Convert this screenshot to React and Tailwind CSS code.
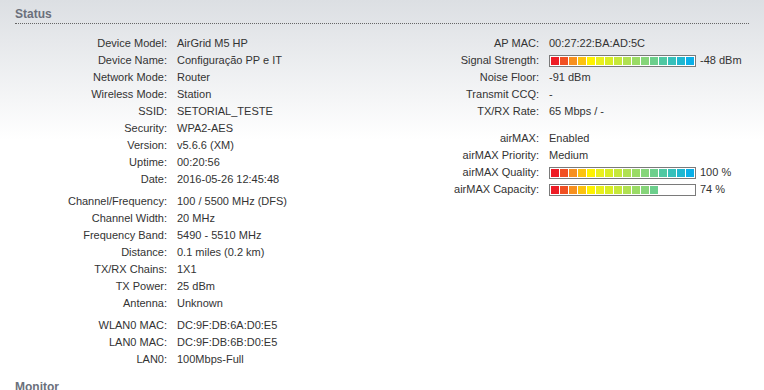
import React from 'react';

const SEGMENT_COLORS = [
  '#ee1c25',
  '#f15022',
  '#f7901e',
  '#fcc20f',
  '#fff200',
  '#eaf01c',
  '#d9ed24',
  '#c6e83a',
  '#b0e152',
  '#9adb66',
  '#86d57a',
  '#6ccf8c',
  '#4fc8a2',
  '#36c0ba',
  '#1fb7d0',
  '#0aafe8',
];

// Segmented level bar (16 blocks)
const LevelBar = ({ filled }) => (
  <span className="inline-flex gap-[1px] p-[1px] border border-[#7a7a7a] bg-white h-[12px] w-[147px] align-middle">
    {SEGMENT_COLORS.map((c, i) => (
      <span
        key={i}
        className="block w-[8px] h-[8px]"
        style={{ backgroundColor: i < filled ? c : 'transparent' }}
      />
    ))}
  </span>
);

const Row = ({ label, labelWidth, children }) => (
  <div className="flex items-center h-[17px]">
    <div className="text-right shrink-0" style={{ width: labelWidth }}>
      {label}
    </div>
    <div className="pl-[10px] flex items-center whitespace-nowrap">{children}</div>
  </div>
);

const left = [
  [
    ['Device Model:', 'AirGrid M5 HP'],
    ['Device Name:', 'Configuração PP e IT'],
    ['Network Mode:', 'Router'],
    ['Wireless Mode:', 'Station'],
    ['SSID:', 'SETORIAL_TESTE'],
    ['Security:', 'WPA2-AES'],
    ['Version:', 'v5.6.6 (XM)'],
    ['Uptime:', '00:20:56'],
    ['Date:', '2016-05-26 12:45:48'],
  ],
  [
    ['Channel/Frequency:', '100 / 5500 MHz (DFS)'],
    ['Channel Width:', '20 MHz'],
    ['Frequency Band:', '5490 - 5510 MHz'],
    ['Distance:', '0.1 miles (0.2 km)'],
    ['TX/RX Chains:', '1X1'],
    ['TX Power:', '25 dBm'],
    ['Antenna:', 'Unknown'],
  ],
  [
    ['WLAN0 MAC:', 'DC:9F:DB:6A:D0:E5'],
    ['LAN0 MAC:', 'DC:9F:DB:6B:D0:E5'],
    ['LAN0:', '100Mbps-Full'],
  ],
];

const App = () => {
  return (
    <div className="min-h-[390px] bg-[linear-gradient(to_bottom,#dcdfe3_0px,#ffffff_140px)] font-['Liberation_Sans',Arial,sans-serif] text-[11px] text-[#333] overflow-hidden">
      <div className="px-[15px] pt-[7px]">
        <h2 className="text-[12px] leading-[15px] font-bold text-[#6b707b] border-b border-dotted border-[#666] pb-[1px]">
          Status
        </h2>

        <div className="flex mt-[11px]">
          {/* Left column */}
          <div className="w-[365px] shrink-0 flex flex-col gap-[5px]">
            {left.map((group, gi) => (
              <div key={gi}>
                {group.map(([l, v]) => (
                  <Row key={l} label={l} labelWidth={152}>
                    {v}
                  </Row>
                ))}
              </div>
            ))}
          </div>

          {/* Right column */}
          <div className="flex flex-col gap-[10px]">
            <div>
              <Row label="AP MAC:" labelWidth={159}>00:27:22:BA:AD:5C</Row>
              <Row label="Signal Strength:" labelWidth={159}>
                <LevelBar filled={16} />
                <span className="ml-[4px]">-48 dBm</span>
              </Row>
              <Row label="Noise Floor:" labelWidth={159}>-91 dBm</Row>
              <Row label="Transmit CCQ:" labelWidth={159}>-</Row>
              <Row label="TX/RX Rate:" labelWidth={159}>65 Mbps / -</Row>
            </div>
            <div>
              <Row label="airMAX:" labelWidth={159}>Enabled</Row>
              <Row label="airMAX Priority:" labelWidth={159}>Medium</Row>
              <Row label="airMAX Quality:" labelWidth={159}>
                <LevelBar filled={16} />
                <span className="ml-[4px]">100 %</span>
              </Row>
              <Row label="airMAX Capacity:" labelWidth={159}>
                <LevelBar filled={12} />
                <span className="ml-[4px]">74 %</span>
              </Row>
            </div>
          </div>
        </div>

        <h2 className="mt-[12px] text-[12px] leading-[15px] font-bold text-[#6b707b]">
          Monitor
        </h2>
      </div>
    </div>
  );
};

export default App;
